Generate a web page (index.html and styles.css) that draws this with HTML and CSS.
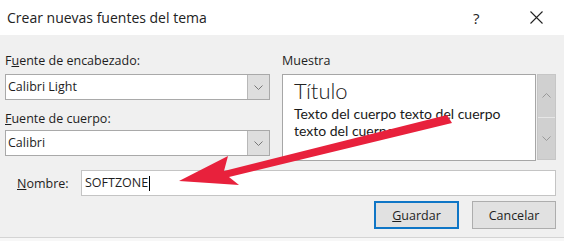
FILE: index.html
```html
<!DOCTYPE html>
<html lang="es">
<head>
    <meta charset="UTF-8">
    <meta name="viewport" content="width=device-width, initial-scale=1.0">
    <title>Crear nuevas fuentes del tema</title>
    <link rel="stylesheet" href="styles.css">
</head>
<body>
    <div class="dialog">
        <div class="titlebar">
            <span class="title">Crear nuevas fuentes del tema</span>
            <span class="help">?</span>
            <span class="close">
                <svg width="13" height="13" viewBox="0 0 13 13"><path d="M0.5 0.5 L12.5 12.5 M12.5 0.5 L0.5 12.5" stroke="#222" stroke-width="1.1" fill="none"/></svg>
            </span>
        </div>

        <div class="content">
            <div class="top-row">
                <div class="fonts">
                    <label class="label">F<u>u</u>ente de encabezado:</label>
                    <div class="select">
                        <span class="select-value">Calibri Light</span>
                        <span class="select-btn"><svg width="9" height="5" viewBox="0 0 9 5"><path d="M0.5 0.5 L4.5 4.5 L8.5 0.5" stroke="#777" fill="none"/></svg></span>
                    </div>

                    <label class="label label-second"><u>F</u>uente de cuerpo:</label>
                    <div class="select">
                        <span class="select-value">Calibri</span>
                        <span class="select-btn"><svg width="9" height="5" viewBox="0 0 9 5"><path d="M0.5 0.5 L4.5 4.5 L8.5 0.5" stroke="#777" fill="none"/></svg></span>
                    </div>
                </div>

                <div class="sample">
                    <label class="label">Muestra</label>
                    <div class="sample-wrap">
                        <div class="sample-box">
                            <div class="sample-title">Título</div>
                            <div class="sample-text">Texto del cuerpo texto del cuerpo texto del cuerpo.</div>
                        </div>
                        <div class="scrollbar">
                            <span class="scroll-btn"><svg width="9" height="5" viewBox="0 0 9 5"><path d="M0.5 4.5 L4.5 0.5 L8.5 4.5" stroke="#999" fill="none"/></svg></span>
                            <span class="scroll-btn"><svg width="9" height="5" viewBox="0 0 9 5"><path d="M0.5 0.5 L4.5 4.5 L8.5 0.5" stroke="#999" fill="none"/></svg></span>
                        </div>
                    </div>
                </div>
            </div>

            <div class="name-row">
                <label class="name-label" for="nombre"><u>N</u>ombre:</label>
                <div class="name-input">SOFTZONE<span class="caret"></span></div>
            </div>

            <div class="buttons">
                <button class="btn btn-default"><u>G</u>uardar</button>
                <button class="btn">Cancelar</button>
            </div>
        </div>
        <div class="bottom-edge"></div>

        <svg class="arrow" width="564" height="241" viewBox="0 0 564 241">
            <polygon points="179,181 228,156 224,171 447,115 452,123 229,177 239,185" fill="#e8213c"/>
        </svg>
    </div>
</body>
</html>
```

FILE: styles.css
```css
body {
    margin: 0;
    padding: 0;
    font-family: "Open Sans", "Noto Sans", Arial, sans-serif;
    font-size: 12.5px;
    color: #1e1e1e;
    background: #f0f0f0;
}
.dialog {
    position: relative;
    width: 564px;
    height: 241px;
    overflow: hidden;
    background: #f0f0f0;
}
.titlebar {
    height: 35px;
    display: flex;
    align-items: center;
    padding-left: 7px;
    background: #ffffff;
}
.title {
    font-size: 14px;
    color: #222;
    flex: 1;
    margin-top: -1px;
}
.help {
    font-size: 15px;
    width: 12px;
    margin-right: 45px;
    color: #222;
}
.close {
    width: 13px;
    margin-right: 21px;
    display: flex;
}
.content {
    padding: 18px 8px 0 5px;
}
.top-row {
    display: grid;
    grid-template-columns: 265px 274px;
    column-gap: 12px;
}
.label {
    display: block;
    line-height: 16px;
    height: 16px;
    margin-bottom: 5px;
}
.label-second {
    margin-top: 11px;
    margin-bottom: 3px;
}
.select {
    display: flex;
    height: 26px;
    box-sizing: border-box;
    border: 1px solid #a9a9a9;
    background: #fff;
}
.select-value {
    flex: 1;
    line-height: 24px;
    padding-left: 2px;
    font-size: 12.5px;
}
.select-btn {
    width: 21px;
    background: #dedede;
    border-left: 1px solid #b8b8b8;
    display: flex;
    align-items: center;
    justify-content: center;
}
.sample-wrap {
    display: flex;
    height: 87px;
}
.sample-box {
    flex: 1;
    box-sizing: border-box;
    border: 1px solid #a6a6a6;
    background: #fff;
    padding: 4px 10px 0 11px;
}
.sample-title {
    font-family: "Lato", "Open Sans", sans-serif;
    font-weight: 300;
    font-size: 22px;
    line-height: 24px;
    color: #222;
}
.sample-text {
    font-family: "Lato", "Open Sans", sans-serif;
    font-size: 14px;
    line-height: 17px;
    color: #1a1a1a;
    margin-top: 2px;
}
.scrollbar {
    width: 19px;
    margin-left: 1px;
    display: flex;
    flex-direction: column;
    background: #d0d0d0;
    border: 1px solid #c6c6c6;
    box-sizing: border-box;
    height: 86px;
}
.scroll-btn {
    flex: 1;
    display: flex;
    align-items: center;
    justify-content: center;
}
.scroll-btn + .scroll-btn {
    border-top: 1px solid #e6e6e6;
}
.name-row {
    display: flex;
    align-items: center;
    margin-top: 9px;
    padding-left: 12px;
}
.name-label {
    width: 64px;
}
.name-input {
    flex: 1;
    height: 26px;
    box-sizing: border-box;
    border: 1px solid #c4c4c4;
    background: #fff;
    line-height: 24px;
    padding-left: 3px;
    font-size: 12.5px;
    display: flex;
    align-items: center;
}
.caret {
    display: inline-block;
    width: 1px;
    height: 15px;
    background: #000;
    margin-left: 1px;
}
.buttons {
    display: flex;
    justify-content: flex-end;
    gap: 13px;
    margin-top: 5px;
}
.btn {
    width: 84px;
    height: 28px;
    box-sizing: border-box;
    background: #e1e1e1;
    border: 1px solid #adadad;
    font-family: inherit;
    font-size: 12.5px;
    color: #1e1e1e;
    padding: 0;
}
.btn-default {
    width: 85px;
    border: 2px solid #0f76c6;
}
.bottom-edge {
    position: absolute;
    left: 0;
    right: 0;
    top: 237px;
    height: 4px;
    border-top: 1px solid #d4d4d4;
    background: #f7f7f7;
}
.arrow {
    position: absolute;
    left: 0;
    top: 0;
    pointer-events: none;
}
```
